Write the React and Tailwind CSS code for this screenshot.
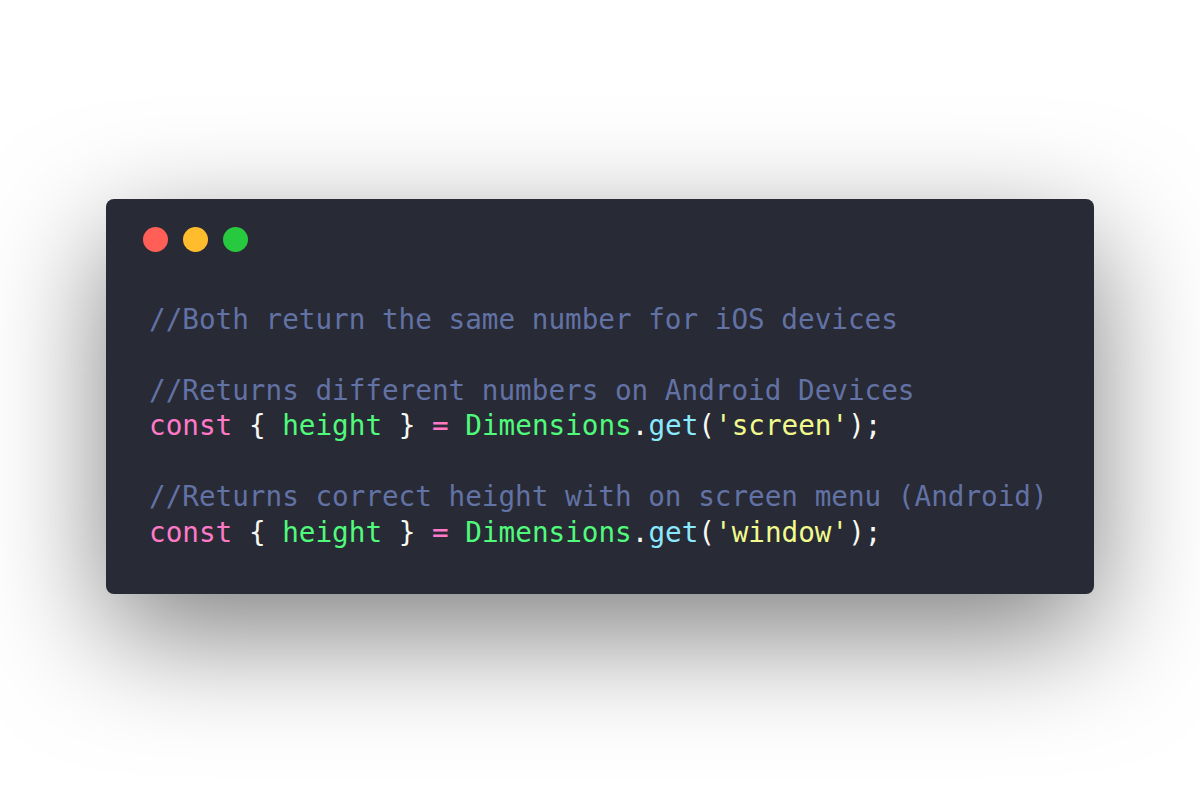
import React from "react";

const C = {
  comment: "text-[#6272a4]",
  pink: "text-[#ff79c6]",
  green: "text-[#50fa7b]",
  cyan: "text-[#8be9fd]",
  yellow: "text-[#f1fa8c]",
  white: "text-[#f8f8f2]",
};

function Line({ children }) {
  return <div className="h-[35.5px] leading-[35.5px] whitespace-pre">{children}</div>;
}

function CodeLine({ arg }) {
  return (
    <Line>
      <span className={C.pink}>const</span>
      <span className={C.white}> {"{"} </span>
      <span className={C.green}>height</span>
      <span className={C.white}> {"}"} </span>
      <span className={C.pink}>=</span>
      <span className={C.white}> </span>
      <span className={C.green}>Dimensions</span>
      <span className={C.white}>.</span>
      <span className={C.cyan}>get</span>
      <span className={C.white}>(</span>
      <span className={C.yellow}>'{arg}'</span>
      <span className={C.white}>);</span>
    </Line>
  );
}

export default function App() {
  return (
    <div className="w-[1200px] h-[793px] bg-white flex justify-center pt-[199px] overflow-hidden">
      <div className="w-[988px] h-[395px] rounded-[8px] bg-[#282a36] shadow-[0_40px_120px_rgba(0,0,0,0.5)] pt-[28px]">
        <div className="flex gap-[15.5px] pl-[37px]">
          <div className="w-[24.5px] h-[24.5px] rounded-full bg-[#ff5f56]" />
          <div className="w-[24.5px] h-[24.5px] rounded-full bg-[#ffbd2e]" />
          <div className="w-[24.5px] h-[24.5px] rounded-full bg-[#27c93f]" />
        </div>
        <div
          className="mt-[50px] pl-[43px] text-[27.65px]"
          style={{ fontFamily: '"DejaVu Sans Mono", "Liberation Mono", monospace' }}
        >
          <Line><span className={C.comment}>//Both return the same number for iOS devices</span></Line>
          <Line> </Line>
          <Line><span className={C.comment}>//Returns different numbers on Android Devices</span></Line>
          <CodeLine arg="screen" />
          <Line> </Line>
          <Line><span className={C.comment}>//Returns correct height with on screen menu (Android)</span></Line>
          <CodeLine arg="window" />
        </div>
      </div>
    </div>
  );
}
